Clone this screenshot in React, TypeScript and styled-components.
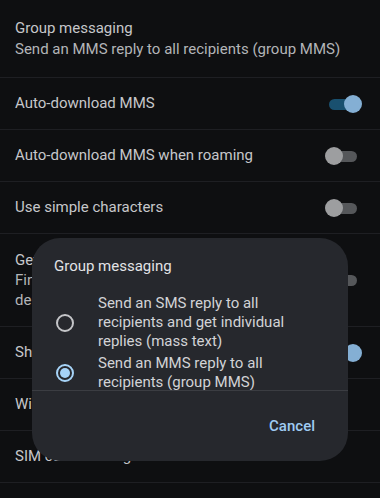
import React, { useState } from 'react';
import styled, { createGlobalStyle } from 'styled-components';

const GlobalStyle = createGlobalStyle`
  html, body {
    margin: 0;
    padding: 0;
    background: #0e0f11;
  }
  body {
    font-family: Roboto, 'Noto Sans', sans-serif;
    -webkit-font-smoothing: antialiased;
  }
`;

const Screen = styled.div`
  position: relative;
  width: 380px;
  height: 498px;
  overflow: hidden;
  background: #0e0f11;
`;

const List = styled.div`
  display: flex;
  flex-flow: column;
`;

const Row = styled.div<{ $tall?: boolean }>`
  display: flex;
  align-items: center;
  justify-content: space-between;
  box-sizing: border-box;
  min-height: ${(p) => (p.$tall ? '78px' : '52px')};
  padding: 0 18px 0 15px;
  border-bottom: 1px solid #1e1f23;
`;

const RowText = styled.div<{ $pad?: string; $narrow?: boolean }>`
  display: flex;
  flex-flow: column;
  padding: ${(p) => p.$pad || '0'};
  max-width: ${(p) => (p.$narrow ? '290px' : 'none')};
`;

const Title = styled.div<{ $lh?: number }>`
  font-size: 15px;
  line-height: ${(p) => p.$lh || 21}px;
  color: #c6c7ca;
  white-space: nowrap;
`;

const Subtitle = styled.div<{ $lh?: number }>`
  font-size: 15px;
  line-height: ${(p) => p.$lh || 21}px;
  color: #b3b5b8;
`;

const Toggle = styled.div<{ $on: boolean }>`
  position: relative;
  width: 37px;
  height: 20px;
  flex-shrink: 0;

  &::before {
    content: '';
    position: absolute;
    left: 4px;
    top: 5px;
    width: 28px;
    height: 11px;
    border-radius: 6px;
    background: ${(p) => (p.$on ? '#19506f' : '#55575a')};
  }

  &::after {
    content: '';
    position: absolute;
    top: 1px;
    left: ${(p) => (p.$on ? '19px' : '0')};
    width: 18px;
    height: 18px;
    border-radius: 50%;
    background: ${(p) => (p.$on ? '#84afd4' : '#9d9ea0')};
  }
`;

const Scrim = styled.div`
  position: absolute;
  inset: 0;
`;

const Dialog = styled.div`
  position: absolute;
  top: 238px;
  left: 32px;
  width: 316px;
  height: 223px;
  border-radius: 28px;
  background: #26282d;
  display: flex;
  flex-flow: column;
  overflow: hidden;
`;

const DialogTitle = styled.div`
  padding: 18px 22px 0 22px;
  font-size: 15px;
  line-height: 20px;
  color: #e2e3e6;
`;

const Options = styled.div`
  height: 115px;
  overflow: hidden;
  padding-top: 18px;
  box-sizing: border-box;
  border-bottom: 1px solid #3b3d42;
  display: flex;
  flex-flow: column;
  gap: 3px;
  flex-shrink: 0;
`;

const Option = styled.label`
  display: flex;
  align-items: center;
  gap: 24px;
  padding-left: 24px;
  padding-right: 52px;
  cursor: pointer;
`;

const Radio = styled.span<{ $checked: boolean }>`
  flex-shrink: 0;
  box-sizing: border-box;
  width: 18px;
  height: 18px;
  border-radius: 50%;
  border: 2px solid ${(p) => (p.$checked ? '#a6d3f7' : '#c4c5c8')};
  display: flex;
  align-items: center;
  justify-content: center;

  &::after {
    content: '';
    display: ${(p) => (p.$checked ? 'block' : 'none')};
    width: 10px;
    height: 10px;
    border-radius: 50%;
    background: #a6d3f7;
  }
`;

const OptionText = styled.span`
  font-size: 15px;
  line-height: 19px;
  color: #d2d3d6;
`;

const Actions = styled.div`
  flex: 1;
  display: flex;
  align-items: center;
  justify-content: flex-end;
  padding-right: 33px;
  padding-bottom: 1px;
`;

const TextButton = styled.button`
  background: transparent;
  border: none;
  padding: 0;
  font-family: Roboto, 'Noto Sans', sans-serif;
  font-size: 15px;
  font-weight: 500;
  color: #9fcbf2;
  cursor: pointer;
`;

const settings = [
  { title: 'Auto-download MMS', on: true },
  { title: 'Auto-download MMS when roaming', on: false },
  { title: 'Use simple characters', on: false },
];

const lower = [
  { title: 'Show when messages are delivered', on: true },
  { title: 'Wireless emergency alerts' },
  { title: 'SIM card messages' },
];

const options = [
  { id: 'sms', label: 'Send an SMS reply to all recipients and get individual replies (mass text)' },
  { id: 'mms', label: 'Send an MMS reply to all recipients (group MMS)' },
];

const App: React.FC = () => {
  const [choice, setChoice] = useState('mms');
  return (
    <Screen>
      <GlobalStyle />
      <List>
        <Row $tall>
          <RowText>
            <Title>Group messaging</Title>
            <Subtitle>Send an MMS reply to all recipients (group MMS)</Subtitle>
          </RowText>
        </Row>
        {settings.map((s) => (
          <Row key={s.title}>
            <Title>{s.title}</Title>
            <Toggle $on={s.on} />
          </Row>
        ))}
        <Row>
          <RowText $pad="16px 0" $narrow>
            <Title $lh={20}>Get SMS delivery reports</Title>
            <Subtitle $lh={20}>Find out if each SMS you send has been delivered</Subtitle>
          </RowText>
          <Toggle $on={false} />
        </Row>
        {lower.map((s) => (
          <Row key={s.title}>
            <Title>{s.title}</Title>
            {s.on !== undefined && <Toggle $on={s.on} />}
          </Row>
        ))}
      </List>
      <Scrim />
      <Dialog>
        <DialogTitle>Group messaging</DialogTitle>
        <Options>
          {options.map((o) => (
            <Option key={o.id} onClick={() => setChoice(o.id)}>
              <Radio $checked={choice === o.id} />
              <OptionText>{o.label}</OptionText>
            </Option>
          ))}
        </Options>
        <Actions>
          <TextButton>Cancel</TextButton>
        </Actions>
      </Dialog>
    </Screen>
  );
};

export default App;
